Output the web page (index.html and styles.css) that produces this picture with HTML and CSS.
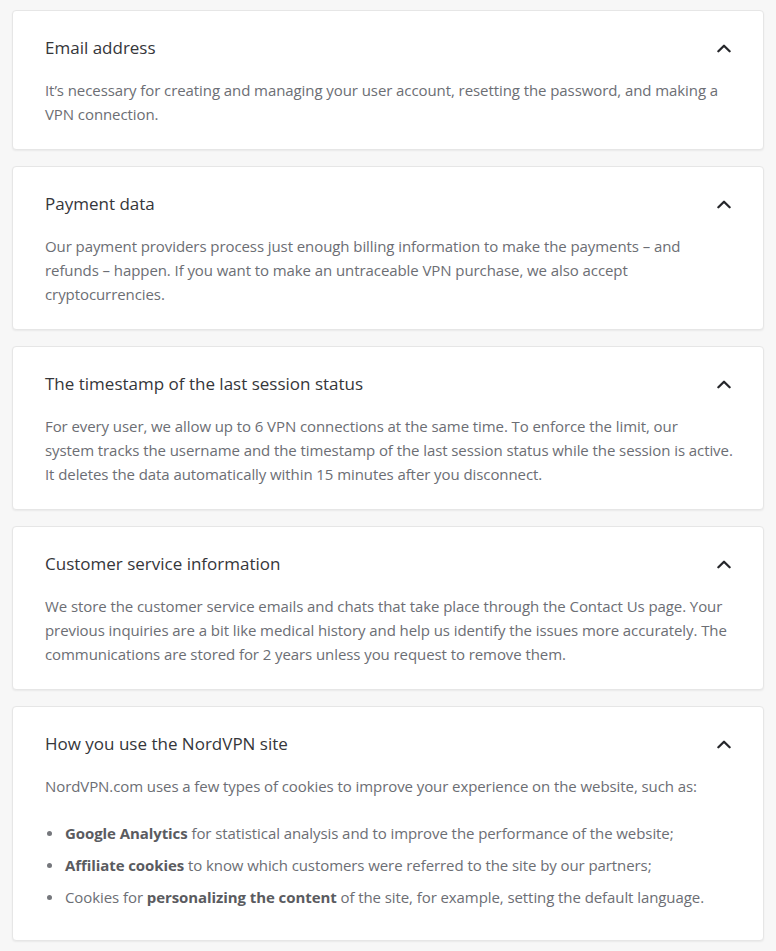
FILE: index.html
```html
<!DOCTYPE html>
<html lang="en">
<head>
<meta charset="utf-8">
<link rel="stylesheet" href="styles.css">
</head>
<body>
<div class="list">
  <section class="card">
    <div class="head"><h3 class="title">Email address</h3><svg class="chev" viewBox="0 0 12 8"><path d="M1 6.5 6 1.5 11 6.5"/></svg></div>
    <p class="text">It’s necessary for creating and managing your user account, resetting the password, and making a VPN connection.</p>
  </section>
  <section class="card">
    <div class="head"><h3 class="title">Payment data</h3><svg class="chev" viewBox="0 0 12 8"><path d="M1 6.5 6 1.5 11 6.5"/></svg></div>
    <p class="text">Our payment providers process just enough billing information to make the payments – and refunds – happen. If you want to make an untraceable VPN purchase, we also accept cryptocurrencies.</p>
  </section>
  <section class="card">
    <div class="head"><h3 class="title">The timestamp of the last session status</h3><svg class="chev" viewBox="0 0 12 8"><path d="M1 6.5 6 1.5 11 6.5"/></svg></div>
    <p class="text">For every user, we allow up to 6 VPN connections at the same time. To enforce the limit, our<br>system tracks the username and the timestamp of the last session status while the session is active. It deletes the data automatically within 15 minutes after you disconnect.</p>
  </section>
  <section class="card">
    <div class="head"><h3 class="title">Customer service information</h3><svg class="chev" viewBox="0 0 12 8"><path d="M1 6.5 6 1.5 11 6.5"/></svg></div>
    <p class="text">We store the customer service emails and chats that take place through the Contact Us page. Your previous inquiries are a bit like medical history and help us identify the issues more accurately. The communications are stored for 2 years unless you request to remove them.</p>
  </section>
  <section class="card">
    <div class="head"><h3 class="title">How you use the NordVPN site</h3><svg class="chev" viewBox="0 0 12 8"><path d="M1 6.5 6 1.5 11 6.5"/></svg></div>
    <p class="text lead">NordVPN.com uses a few types of cookies to improve your experience on the website, such as:</p>
    <ul class="bullets">
      <li><b>Google Analytics</b> for statistical analysis and to improve the performance of the website;</li>
      <li><b>Affiliate cookies</b> to know which customers were referred to the site by our partners;</li>
      <li>Cookies for <b>personalizing the content</b> of the site, for example, setting the default language.</li>
    </ul>
  </section>
</div>
</body>
</html>
```
FILE: styles.css
```css
html,body{margin:0;padding:0;background:#f7f7f7}
body{font-family:"Open Sans","Liberation Sans",sans-serif}
.list{display:flex;flex-direction:column;gap:16px;padding:10px 12px 9px 12px}
.card{background:#fff;border:1px solid #e6e6e6;border-radius:4px;box-shadow:0 1px 2px rgba(0,0,0,0.06);padding:23px 26px 23px 32px}
.head{display:flex;align-items:center;justify-content:space-between}
.title{margin:0;font-size:17px;line-height:28px;font-weight:500;color:#35363a}
.chev{width:14px;height:9px;margin-right:6px;fill:none;stroke:#26272b;stroke-width:2;stroke-linecap:round;stroke-linejoin:round}
.text{margin:16px 0 0;font-size:15px;line-height:24px;letter-spacing:-0.08px;color:#6c6e74}
.lead{margin-bottom:23px}
.bullets{margin:0;padding:0 0 0 20px;list-style:none;font-size:15px;line-height:24px;letter-spacing:-0.08px;color:#6c6e74}
.bullets li{position:relative;margin-bottom:8px}
.bullets li::before{content:"";position:absolute;left:-18px;top:10px;width:5px;height:5px;border-radius:50%;background:#75777c}
.bullets b{font-weight:700;color:#5a5b60}
```
